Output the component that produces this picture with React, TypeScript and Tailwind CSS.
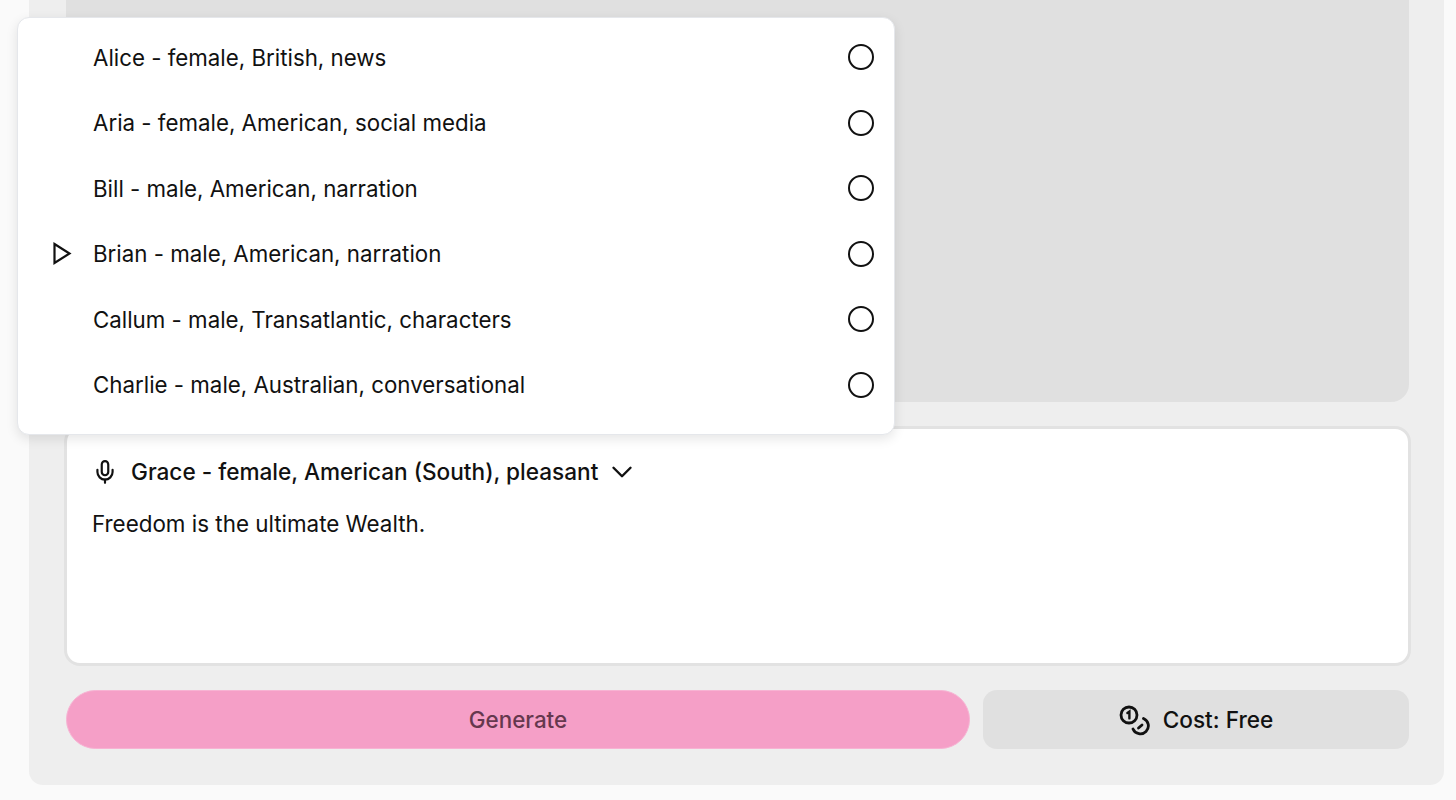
import { ChevronDown, Mic } from 'lucide-react';

const VOICES = [
  'Alice - female, British, news',
  'Aria - female, American, social media',
  'Bill - male, American, narration',
  'Brian - male, American, narration',
  'Callum - male, Transatlantic, characters',
  'Charlie - male, Australian, conversational',
];

function PlayIcon() {
  return (
    <svg width="20" height="24" viewBox="0 0 20 24" fill="none" stroke="#111" strokeWidth="2.2" className="absolute left-[34px] top-[21px]">
      <path d="M2.5 2 L17.5 11.5 L2.5 21 Z" strokeLinejoin="miter" />
    </svg>
  );
}

function CoinsIcon() {
  return (
    <svg width="32" height="32" viewBox="0 0 32 32" fill="none" stroke="#111" strokeWidth="2.8" strokeLinecap="round" className="-ml-[1px]">
      <circle cx="11" cy="11" r="8" />
      <path d="M9.4 9 L11.4 7.6 L11.4 14.4" strokeWidth="2.4" />
      <path d="M25.5 14.5 A8 8 0 1 1 15 25" />
      <path d="M24 21 L20.5 24" />
    </svg>
  );
}

export default function App() {
  return (
    <div className="relative h-[800px] w-[1456px] overflow-hidden bg-[#fafafa] font-['Inter',sans-serif] text-[#111]">
      <div className="ml-[29px] flex h-[785px] w-[1415px] flex-col gap-[24px] rounded-b-[14px] bg-[#eeeeee] pb-[36px] pl-[35px] pr-[33px]">
        {/* Top gray area */}
        <div className="mx-[2px] flex-1 rounded-b-[18px] bg-[#e0e0e0]" />

        {/* Text box */}
        <div className="h-[240px] rounded-[16px] border-[3px] border-[#e2e2e2] bg-white pl-[25px] pt-[26px]">
          <div className="flex items-center">
            <Mic size={26} strokeWidth={2} />
            <span className="ml-[13px] text-[22.6px] font-medium leading-[34px]">Grace - female, American (South), pleasant</span>
            <ChevronDown size={34} strokeWidth={1.7} className="ml-[7px]" />
          </div>
          <p className="mt-[18px] text-[22.4px] leading-[34px]">Freedom is the ultimate Wealth.</p>
        </div>

        {/* Buttons */}
        <div className="mx-[2px] flex h-[59px] gap-[13px]">
          <button className="w-[904px] rounded-full border border-[#f7b3d3] bg-[#f59fc7] pt-[1px] text-[22.4px] font-medium text-[#65384e]">Generate</button>
          <button className="flex flex-1 items-center justify-center gap-[13px] rounded-[14px] bg-[#e0e0e0] pt-[1px] text-[22.6px] font-medium">
            <CoinsIcon />
            Cost: Free
          </button>
        </div>
      </div>

      {/* Voice dropdown */}
      <div className="absolute left-[17px] top-[17px] h-[418px] w-[878px] rounded-[12px] border border-[#e5e7eb] bg-white pt-[6.5px] shadow-[0_4px_12px_rgba(0,0,0,0.1)]">
        {VOICES.map((voice, i) => (
          <div key={voice} className="relative flex h-[65.5px] items-center justify-between pl-[75px] pr-[20px]">
            {i === 3 && <PlayIcon />}
            <span className="text-[22.3px]">{voice}</span>
            <span className="h-[26px] w-[26px] rounded-full border-2 border-[#111]" />
          </div>
        ))}
      </div>
    </div>
  );
}
